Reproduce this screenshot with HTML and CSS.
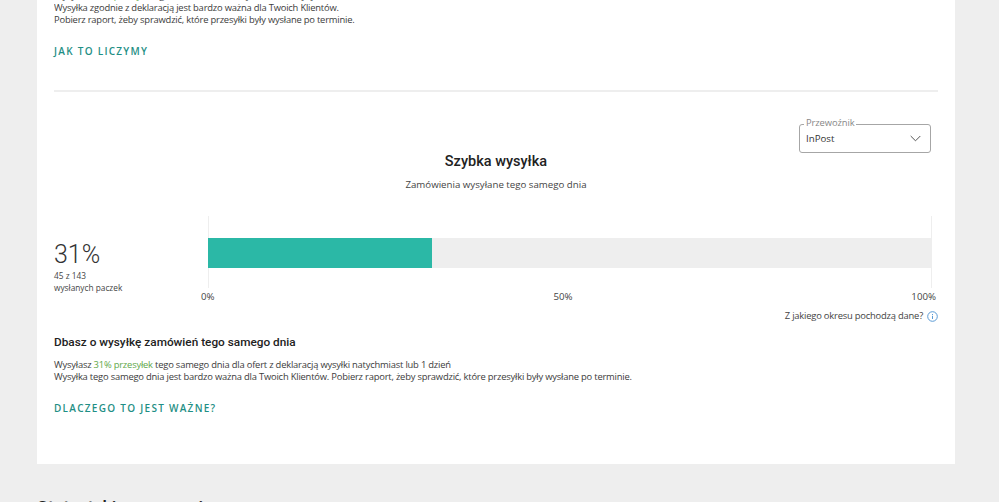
FILE: index.html
```html
<!DOCTYPE html>
<html lang="pl">
<head>
<meta charset="utf-8">
<title>Szybka wysyłka</title>
<link rel="stylesheet" href="styles.css">
</head>
<body>
<main class="card">
  <section class="top">
    <div class="top-clip">
      <p class="text">Wysyłasz <span class="green">97% przesyłek</span> zgodnie z deklarowanym czasem wysyłki<br>Wysyłka zgodnie z deklaracją jest bardzo ważna dla Twoich Klientów.<br>Pobierz raport, żeby sprawdzić, które przesyłki były wysłane po terminie.</p>
    </div>
    <a class="link first">JAK TO LICZYMY</a>
  </section>
  <hr class="rule">
  <section class="chart-section">
    <div class="select-row">
      <div class="select">
        <span class="legend">Przewoźnik</span>
        <span class="value">InPost</span>
        <svg class="chev" width="11" height="7" viewBox="0 0 11 7"><path d="M.7 1l4.8 4.8L10.300 1" fill="none" stroke="#555" stroke-width="1"/></svg>
      </div>
    </div>
    <h2 class="title">Szybka wysyłka</h2>
    <p class="sub">Zamówienia wysyłane tego samego dnia</p>
    <div class="chart">
      <div class="stat">
        <div class="pct">31%</div>
        <div class="small">45 z 143<br>wysłanych paczek</div>
      </div>
      <div class="plot">
        <div class="track"><div class="fill" style="width:31%"></div></div>
        <div class="axis"><span>0%</span><span>50%</span><span>100%</span></div>
      </div>
    </div>
    <div class="period">Z jakiego okresu pochodzą dane?
      <svg width="11" height="11" viewBox="0 0 11 11"><circle cx="5.5" cy="5.500" r="4.800" fill="none" stroke="#5b9bd5"/><path d="M5.500 4.800v3.200M5.500 3v1" stroke="#5b9bd5"/></svg>
    </div>
    <h3 class="head">Dbasz o wysyłkę zamówień tego samego dnia</h3>
    <p class="text body">Wysyłasz <span class="green">31% przesyłek</span> tego samego dnia dla ofert z deklaracją wysyłki natychmiast lub 1 dzień<br>Wysyłka tego samego dnia jest bardzo ważna dla Twoich Klientów. Pobierz raport, żeby sprawdzić, które przesyłki były wysłane po terminie.</p>
    <a class="link second">DLACZEGO TO JEST WAŻNE?</a>
  </section>
</main>
<h2 class="next">Statystyki wymagania</h2>
</body>
</html>
```
FILE: styles.css
```css
html, body { margin: 0; height: 502px; overflow: hidden; background: #eeeeee; }
body { font-family: "Open Sans", sans-serif; color: #333; position: relative; }
.card { margin: 0 44px 0 37px; height: 464px; background: #fff; padding: 0 17px; box-sizing: border-box; }
.top { height: 90px; }
.top-clip { height: 26px; overflow: hidden; display: flex; flex-direction: column; justify-content: flex-end; }
.text { margin: 0; font-size: 9.400px; letter-spacing: -0.2px; line-height: 12px; color: #3c3c3c; }
.green { color: #5fa84a; }
.link { display: block; font-size: 10px; font-weight: 600; letter-spacing: 1.28px; color: #1f8f85; line-height: 14px; }
.first { margin-top: 18px; }
.rule { margin: 0; border: 0; border-top: 2px solid #eeeeee; }
.select-row { display: flex; justify-content: flex-end; padding: 32px 7px 0 0; }
.select { position: relative; box-sizing: border-box; width: 132px; height: 29px; border: 1.5px solid #a6a6a6; border-radius: 3px; display: flex; align-items: center; justify-content: space-between; padding: 0 9px 0 6px; }
.legend { position: absolute; left: 4px; top: -8px; background: #fff; padding: 0 2px; font-size: 9.400px; letter-spacing: -0.1px; line-height: 12px; color: #888; }
.value { font-size: 9.700px; color: #333; }
.title { margin: -1px 0 0; text-align: center; font: 500 14.500px/20px Roboto, sans-serif; color: #222; }
.sub { margin: 6px 0 0; text-align: center; font-size: 9.700px; line-height: 14px; color: #444; }
.chart { display: flex; margin-top: 24px; }
.stat { width: 154px; padding-top: 24px; box-sizing: border-box; }
.pct { font: 300 25px/30px Roboto, sans-serif; color: #333; }
.small { margin-top: 0; font-size: 8.300px; line-height: 12px; color: #444; }
.plot { width: 724px; height: 81px; background: linear-gradient(#eee,#eee) left top/1px 72px no-repeat, linear-gradient(#eee,#eee) right top/1px 72px no-repeat; }
.track { height: 30px; background: #eeeeee; position: relative; top: 22px; }
.fill { height: 100%; background: #2bb8a6; }
.axis { display: flex; justify-content: space-between; margin: 44px -4px 0 -7px; font-size: 9.700px; line-height: 14px; color: #444; }
.period { display: flex; justify-content: flex-end; align-items: center; gap: 4px; margin: 12px 0 0; font-size: 9.400px; letter-spacing: -0.2px; line-height: 14px; color: #444; }
.head { margin: 11px 0 0; font: 500 11.800px/16px Roboto, sans-serif; color: #222; }
.body { margin-top: 9px; }
.second { margin-top: 18px; }
.next { position: absolute; left: 37px; top: 496px; margin: 0; font: 500 18px/24px Roboto, sans-serif; color: #222; }
```
